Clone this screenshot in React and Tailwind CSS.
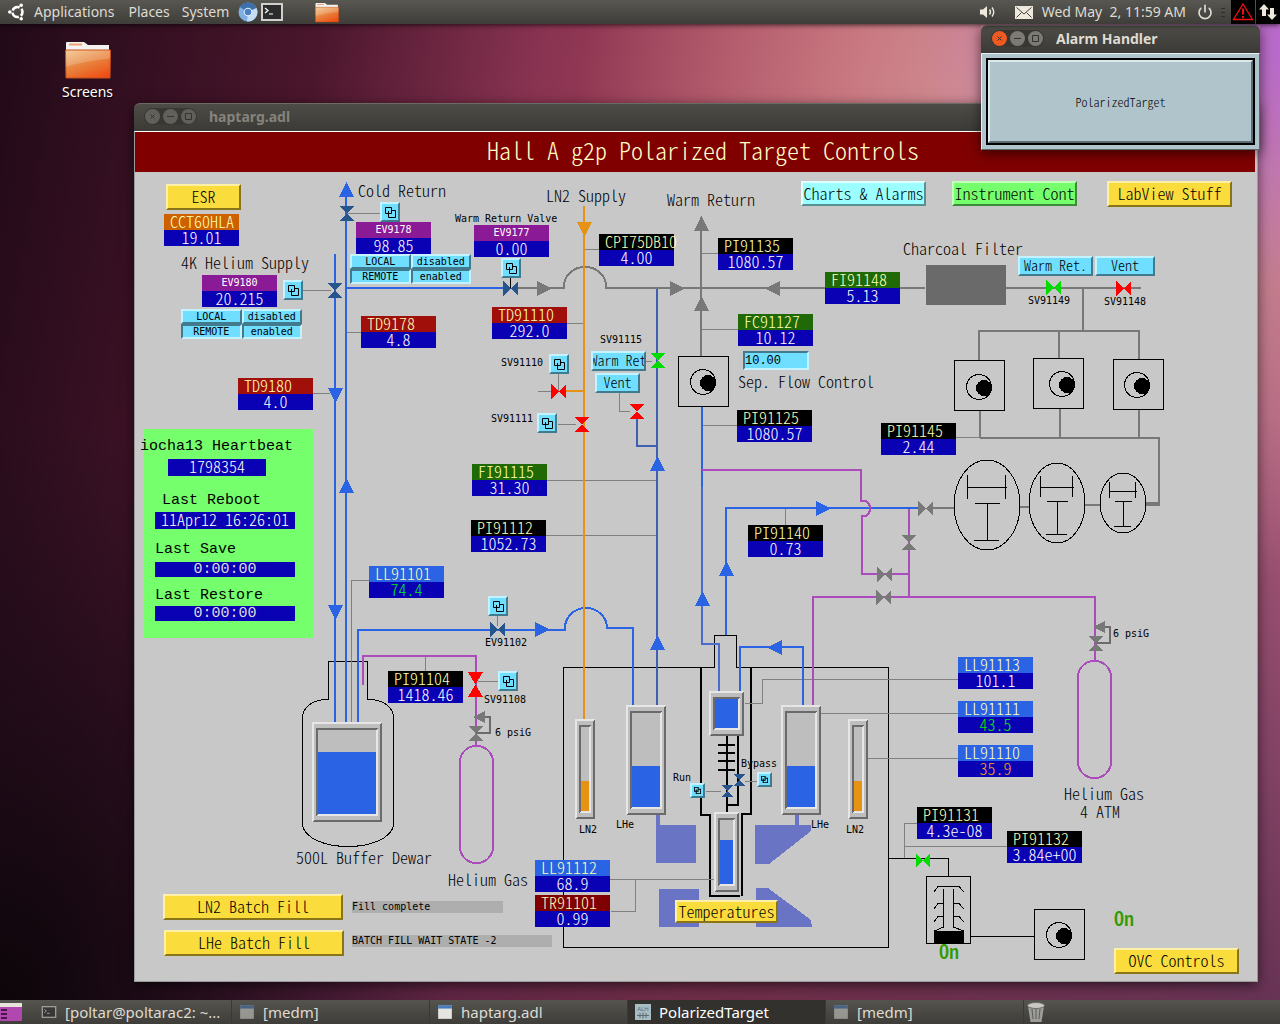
import React, { useState } from 'react';
import { Power } from 'lucide-react';

// Display coordinates are desktop coordinates, the canvas starts here
const ORIGIN = { x: 134, y: 131 };
const at = (x, y) => ({ left: x - ORIGIN.x, top: y - ORIGIN.y });

const BLUE = '#2a63e4';
const DULL = '#3f5fb4';
const GRAY = '#787878';
const PURPLE = '#ac4cbc';
const ORANGE = '#e69214';
const STEEL = '#26548c';
const RED = '#ff0000';
const GREEN = '#00dc00';

const narrow = "font-['Noto_Sans_CJK_JP',monospace] font-light [font-feature-settings:'hwid','liga'_0]";
const mono = "font-['DejaVu_Sans_Mono',monospace]";
const wide = "font-['Liberation_Mono',monospace]";
const ui = "font-['Noto_Sans',sans-serif]";

const labelColors = {
  orange: 'bg-[#cd6100]',
  purple: 'bg-[#8b1a96]',
  red: 'bg-[#a00f0a]',
  maroon: 'bg-[#800000]',
  black: 'bg-black',
  green: 'bg-[#1f6a06]',
  blue: 'bg-[#2a63e4]',
};

const readouts = [
  { x: 164, y: 214, label: 'CCT60HLA', value: '19.01', color: 'orange' },
  { x: 356, y: 222, label: 'EV9178', value: '98.85', color: 'purple' },
  { x: 202, y: 275, label: 'EV9180', value: '20.215', color: 'purple' },
  { x: 474, y: 225, label: 'EV9177', value: '0.00', color: 'purple' },
  { x: 361, y: 316, label: 'TD9178', value: '4.8', color: 'red' },
  { x: 238, y: 378, label: 'TD9180', value: '4.0', color: 'red' },
  { x: 492, y: 307, label: 'TD91110', value: '292.0', color: 'red' },
  { x: 599, y: 234, label: 'CPI75DB10', value: '4.00', color: 'black' },
  { x: 718, y: 238, label: 'PI91135', value: '1080.57', color: 'black' },
  { x: 825, y: 272, label: 'FI91148', value: '5.13', color: 'green' },
  { x: 738, y: 314, label: 'FC91127', value: '10.12', color: 'green' },
  { x: 737, y: 410, label: 'PI91125', value: '1080.57', color: 'black' },
  { x: 881, y: 423, label: 'PI91145', value: '2.44', color: 'black' },
  { x: 472, y: 464, label: 'FI91115', value: '31.30', color: 'green' },
  { x: 471, y: 520, label: 'PI91112', value: '1052.73', color: 'black' },
  { x: 369, y: 566, label: 'LL91101', value: '74.4', color: 'blue', tone: 'text-[#00f000]' },
  { x: 388, y: 671, label: 'PI91104', value: '1418.46', color: 'black' },
  { x: 748, y: 525, label: 'PI91140', value: '0.73', color: 'black' },
  { x: 958, y: 657, label: 'LL91113', value: '101.1', color: 'blue' },
  { x: 958, y: 701, label: 'LL91111', value: '43.5', color: 'blue', tone: 'text-[#00f000]' },
  { x: 958, y: 745, label: 'LL91110', value: '35.9', color: 'blue', tone: 'text-[#ffa414]' },
  { x: 535, y: 860, label: 'LL91112', value: '68.9', color: 'blue' },
  { x: 535, y: 895, label: 'TR91101', value: '0.99', color: 'maroon' },
  { x: 917, y: 807, label: 'PI91131', value: '4.3e-08', color: 'black' },
  { x: 1007, y: 831, label: 'PI91132', value: '3.84e+00', color: 'black' },
];

const titles = [
  [358, 197, 'Cold Return'],
  [181, 269, '4K Helium Supply'],
  [546, 202, 'LN2 Supply'],
  [667, 206, 'Warm Return'],
  [903, 255, 'Charcoal Filter'],
  [738, 388, 'Sep. Flow Control'],
  [296, 864, '500L Buffer Dewar'],
  [448, 886, 'Helium Gas'],
  [1064, 800, 'Helium Gas'],
  [1080, 818, '4 ATM'],
];

const tags = [
  [455, 222, 'Warm Return Valve'],
  [600, 343, 'SV91115'],
  [501, 366, 'SV91110'],
  [491, 422, 'SV91111'],
  [1028, 304, 'SV91149'],
  [1104, 305, 'SV91148'],
  [485, 646, 'EV91102'],
  [484, 703, 'SV91108'],
  [495, 736, '6 psiG'],
  [1113, 637, '6 psiG'],
  [673, 781, 'Run'],
  [741, 767, 'Bypass'],
  [579, 833, 'LN2'],
  [616, 828, 'LHe'],
  [811, 828, 'LHe'],
  [846, 833, 'LN2'],
];

const relatedDisplays = [
  { x: 380, y: 202, name: 'EV9178' },
  { x: 283, y: 280, name: 'EV9180' },
  { x: 501, y: 258, name: 'EV9177' },
  { x: 549, y: 354, name: 'SV91110' },
  { x: 537, y: 413, name: 'SV91111' },
  { x: 488, y: 596, name: 'EV91102' },
  { x: 498, y: 671, name: 'SV91108' },
  { x: 690, y: 783, name: 'Run', small: true },
  { x: 757, y: 772, name: 'Bypass', small: true },
];

const Readout = ({ x, y, label, value, color, tone = 'text-white' }) => (
  <div className="absolute w-[75px]" style={at(x, y)}>
    {color === 'purple' ? (
      <div className={`h-4 text-center text-[10px] leading-4 text-white ${mono} ${labelColors[color]}`}>{label}</div>
    ) : (
      <div className={`h-4 whitespace-nowrap pl-[6px] text-base leading-[14px] text-[#fcffb8] ${narrow} ${labelColors[color]}`}>{label}</div>
    )}
    <div className={`h-4 bg-[#0a00b4] text-center text-base leading-[14px] ${narrow} ${tone}`}>{value}</div>
  </div>
);

const buttonSkins = {
  yellow: 'bg-[#fadc3c] border-t-[#fff0a8] border-l-[#fff0a8] border-r-[#8a7418] border-b-[#8a7418]',
  aqua: 'bg-[#9cffff] border-t-[#e0ffff] border-l-[#e0ffff] border-r-[#569294] border-b-[#569294]',
  green: 'bg-[#76ff6c] border-t-[#c4ffc0] border-l-[#c4ffc0] border-r-[#3e8b3a] border-b-[#3e8b3a]',
  cyan: 'bg-[#70deff] border-t-[#c4f2ff] border-l-[#c4f2ff] border-r-[#407a8c] border-b-[#407a8c]',
};

const CanvasButton = ({ x, y, size, skin = 'yellow', small, children }) => (
  <button
    type="button"
    className={`absolute flex items-center justify-center overflow-hidden whitespace-nowrap border-2 pb-[2px] text-black ${size} ${buttonSkins[skin]} ${narrow} ${small ? 'text-sm leading-[14px]' : 'text-base leading-4'}`}
    style={at(x, y)}
  >
    {children}
  </button>
);

const RelatedDisplay = ({ x, y, name, small }) => (
  <button
    type="button"
    aria-label={`Open ${name}`}
    className={`absolute flex items-center justify-center border-2 ${small ? 'size-[15px]' : 'size-5'} ${buttonSkins.cyan}`}
    style={at(x, y)}
  >
    <svg viewBox="0 0 11 11" className={small ? 'size-[7px]' : 'size-[11px]'} fill="none" stroke="black" strokeWidth={small ? 1.6 : 1}>
      <path d="M0.5 0.5h6v6h-6z" />
      <path d="M7 3.5h3.5v7h-7v-4" />
      <path d="M3.5 4v2.5" />
    </svg>
  </button>
);

const choiceBase = `h-[15px] border-2 text-[10px] leading-[11px] text-black bg-[#70deff] ${mono}`;
const raised = 'border-t-[#c4f2ff] border-l-[#c4f2ff] border-r-[#407a8c] border-b-[#407a8c]';
const sunken = 'border-t-[#407a8c] border-l-[#407a8c] border-r-[#c4f2ff] border-b-[#c4f2ff]';

const ModeSwitch = ({ x, y, name }) => {
  const [remote, setRemote] = useState(true);
  const [enabled, setEnabled] = useState(true);
  return (
    <div role="group" aria-label={name} className="absolute grid w-[121px] grid-cols-2" style={at(x, y)}>
      <button type="button" onClick={() => setRemote(false)} className={`${choiceBase} ${remote ? raised : sunken}`}>LOCAL</button>
      <button type="button" onClick={() => setEnabled(false)} className={`${choiceBase} ${enabled ? raised : sunken}`}>disabled</button>
      <button type="button" onClick={() => setRemote(true)} className={`${choiceBase} ${remote ? sunken : raised}`}>REMOTE</button>
      <button type="button" onClick={() => setEnabled(true)} className={`${choiceBase} ${enabled ? sunken : raised}`}>enabled</button>
    </div>
  );
};

const Field = ({ x, y, className, children }) => (
  <div className={`absolute whitespace-nowrap ${className}`} style={at(x, y)}>{children}</div>
);

// ---- schematic parts ----

const Pipe = ({ d, c = BLUE, w = 2 }) => <path d={d} fill="none" stroke={c} strokeWidth={w} />;

const ValveH = ({ x, y, c, w = 15, h = 15 }) => (
  <path d={`M${x} ${y}v${h}l${w / 2} ${-h / 2}zM${x + w} ${y}v${h}l${-w / 2} ${-h / 2}z`} fill={c} />
);

const ValveV = ({ x, y, c, w = 15, h = 15 }) => (
  <path d={`M${x} ${y}h${w}l${-w / 2} ${h / 2}zM${x} ${y + h}h${w}l${-w / 2} ${-h / 2}z`} fill={c} />
);

const arrowPaths = {
  up: 'M0 15h15l-7.5 -15z',
  down: 'M0 0h15l-7.5 15z',
  right: 'M0 0v15l15 -7.5z',
  left: 'M15 0v15l-15 -7.5z',
};

const Arrow = ({ x, y, dir, c = BLUE }) => (
  <path d={arrowPaths[dir]} transform={`translate(${x} ${y})`} fill={c} />
);

const Pump = ({ x, y, dx = 25, dy = 26 }) => (
  <g>
    <rect x={x + 0.5} y={y + 0.5} width="50" height="50" fill="none" stroke="black" />
    <circle cx={x + dx} cy={y + dy} r="12.5" fill="none" stroke="black" />
    <circle cx={x + dx + 5} cy={y + dy + 1} r="8" fill="black" />
  </g>
);

const Turbo = ({ cx, cy, rx, ry, lines }) => (
  <g fill="none" stroke="black">
    <ellipse cx={cx} cy={cy} rx={rx} ry={ry} />
    <path d={lines} />
  </g>
);

const Vessel = ({ x, y, w, h, level, c = BLUE }) => {
  const ix = x + 4;
  const iy = y + 6;
  const iw = w - 8;
  const ih = h - 12;
  return (
    <g>
      <rect x={x} y={y} width={w} height={h} fill="#bebebe" />
      <path d={`M${x} ${y}h${w}l-2 2h${4 - w}v${h - 4}l-2 2z`} fill="#e6e6e6" />
      <path d={`M${x + w} ${y + h}h${-w}l2 -2h${w - 4}v${4 - h}l2 -2z`} fill="#6a6a6a" />
      <path d={`M${ix} ${iy}h${iw}l-2 2h${4 - iw}v${ih - 4}l-2 2z`} fill="#6a6a6a" />
      <path d={`M${ix + iw} ${iy + ih}h${-iw}l2 -2h${iw - 4}v${4 - ih}l2 -2z`} fill="#e6e6e6" />
      <rect x={ix + 2} y={level} width={iw - 4} height={iy + ih - 2 - level} fill={c} />
    </g>
  );
};

const Regulator = ({ x, y }) => (
  <g>
    <path d={`M${x + 8} ${y + 6}h7v16h-14`} fill="none" stroke="#6b6b6b" strokeWidth="2" />
    <path d={`M${x - 2} ${y + 6}l12 -6v12z`} fill={GRAY} />
    <ValveV x={x - 7} y={y + 15} c={GRAY} />
  </g>
);

const Schematic = () => (
  <svg viewBox="134 131 1124 851" className="absolute left-0 top-0 h-[851px] w-[1124px]">
    <g shapeRendering="crispEdges">
      <rect x="926" y="265" width="80" height="40" fill="#6a6a6a" />

      {/* magnet coils */}
      <g fill="#6a74c4">
        <path d="M656 814h4v11h36v38h-40z" />
        <path d="M659 889h40v38h-40z" />
        <path d="M755 825h40v-11h4v11h12v6l-42 33h-14z" />
        <path d="M756 888h12l43 32l1 7h-56z" />
      </g>

      {/* cryostat and dewar outlines */}
      <g fill="none" stroke="black">
        <path d="M714.5 667.5H563.5V947.5H888.5V667.5H736.5V635.5H714.5V667.5" />
        <path d="M328.5 699.5V661.5H367.5V699.5H372C384 701 393.5 707 393.5 718V826C390 839 370 846.5 348 846.5C326 846.5 306 839 302.5 826V718C302.5 707 312 701 324 699.5H328.5" />
      </g>
      <g fill="none" stroke="black" strokeWidth="2">
        <path d="M701 667V815H710V896H740" />
        <path d="M751 667V814H742V896" />
        <path d="M727 736V812M738 736V805H727" />
        <path d="M718 745h17M718 753h17M718 761h17M718 770h17" />
      </g>

      {/* instrument leads */}
      <g fill="none" stroke="#808080">
        <path d="M347 213.5H380M303 290.5H331M347 332.5H361M313 393.5H330" />
        <path d="M369 580.5H351.5V723" />
        <path d="M538 391.5H551M558.5 374V391M558 424.5H576" />
        <path d="M584 249.5H599M567 323.5H583M702 253.5H718M702 329.5H738M702 425.5H737" />
        <path d="M646 361.5H652M619.5 393V411.5H630" />
        <path d="M547 480.5H657M546 535.5H657M956 437.5H980M785.5 509V525" />
        <path d="M425.5 657V671M478 681.5H498M497.5 616V626" />
        <path d="M706 791.5H721M745 781.5H758" />
        <path d="M745 703.5H762.5V679.5H958M821 713.5H958M868 758.5H958" />
        <path d="M610 879.5H714M611 911.5H635.5V879.5" />
        <path d="M904.5 858V823.5H917M904.5 846.5H1007" />
      </g>
      <path d="M510.5 278V288" stroke="black" />

      {/* warm gas */}
      <Pipe c={GRAY} d="M518 288H564V286A21 19 0 0 1 606 286V288H925M1006 288H1141" />
      <Pipe c={GRAY} d="M701 217V356" />
      <Pipe c={GRAY} d="M1083 288V331M979 360V331H1139V360M1059 331V358" />
      <Pipe c={GRAY} d="M980 411V438M1060 409V438M1139 409V438M980 438H1159V504" />
      <Pipe c={GRAY} d="M931 508H954M1020 507H1029M1085 505H1100" />
      <Pipe c={GRAY} w={4} d="M1146 504H1160" />

      {/* cold lines */}
      <Pipe d="M346 195V722M335 254V722M347 288H504" />
      <Pipe d="M358 722V630H565V628A21 20 0 0 1 607 628H633V706" />
      <Pipe c={DULL} d="M657 289V706M637 419V446H657" />
      <Pipe d="M702 407V487" />
      <Pipe c="#4a6ccc" d="M702 487V644H719V692" />
      <Pipe d="M726 635V508H918" />
      <Pipe d="M740 692V647H803V706" />

      {/* nitrogen */}
      <Pipe c={ORANGE} d="M584 206V720M566 391H584" />

      {/* helium gas */}
      <Pipe c={PURPLE} d="M702 470H861V501H866A6 8 0 0 1 866 516H862V574H909" />
      <Pipe c={PURPLE} d="M909 509V598M813 705V597H1095V661" />
      <Pipe c={PURPLE} d="M363 685V656H476V746" />
      <rect x="460" y="746" width="33" height="117" rx="16" fill="none" stroke={PURPLE} strokeWidth="2" />
      <rect x="1078" y="661" width="33" height="117" rx="16" fill="none" stroke={PURPLE} strokeWidth="2" />

      <Arrow x={339} y={182} dir="up" />
      <Arrow x={339} y={478} dir="up" />
      <Arrow x={328} y={388} dir="down" />
      <Arrow x={328} y={605} dir="down" />
      <Arrow x={577} y={222} dir="down" c={ORANGE} />
      <Arrow x={537} y={281} dir="right" c={GRAY} />
      <Arrow x={670} y={281} dir="right" c={GRAY} />
      <Arrow x={765} y={281} dir="left" c={GRAY} />
      <Arrow x={694} y={216} dir="up" c={GRAY} />
      <Arrow x={694} y={296} dir="up" c={GRAY} />
      <Arrow x={650} y={456} dir="up" />
      <Arrow x={650} y={635} dir="up" />
      <Arrow x={695} y={591} dir="up" />
      <Arrow x={719} y={561} dir="up" />
      <Arrow x={816} y={501} dir="right" />
      <Arrow x={535} y={622} dir="right" />
      <Arrow x={767} y={640} dir="left" />

      <ValveV x={339} y={206} c={STEEL} />
      <ValveV x={327} y={283} c={STEEL} />
      <ValveH x={503} y={281} c={STEEL} />
      <ValveH x={490} y={622} c={STEEL} />
      <ValveV x={733} y={774} w={12} h={12} c={STEEL} />
      <ValveV x={721} y={785} w={12} h={12} c={STEEL} />
      <ValveH x={551} y={384} c={RED} />
      <ValveV x={574} y={417} c={RED} />
      <ValveV x={629} y={404} c={RED} />
      <ValveV x={650} y={353} c={GREEN} />
      <ValveH x={1046} y={280} c={GREEN} />
      <ValveH x={1116} y={281} c={RED} />
      <ValveV x={468} y={672} h={25} c={RED} />
      <ValveH x={918} y={501} c={GRAY} />
      <ValveV x={901} y={535} c={GRAY} />
      <ValveH x={877} y={567} c={GRAY} />
      <ValveH x={876} y={590} c={GRAY} />
      <Regulator x={475} y={711} />
      <Regulator x={1095} y={621} />

      <Vessel x={312} y={722} w={70} h={100} level={752} />
      <Vessel x={575} y={719} w={20} h={100} level={781} c={ORANGE} />
      <Vessel x={848} y={719} w={20} h={100} level={781} c={ORANGE} />
      <Vessel x={626} y={705} w={40} h={110} level={766} />
      <Vessel x={781} y={705} w={40} h={110} level={766} />
      <Vessel x={709} y={691} w={35} h={45} level={699} />
      <Vessel x={714} y={812} w={25} h={80} level={840} />

      <Pump x={678} y={356} />
      <Pump x={954} y={360} dy={27} />
      <Pump x={1033} y={358} dx={29} />
      <Pump x={1113} y={359} dx={24} />
      <Pump x={1034} y={909} />

      <Turbo cx={987} cy={505} rx={33} ry={45} lines="M967.5 475v24M1005.5 475v24M967 487.5h40M975 503.5h25M987.5 503v37M974 540.5h25" />
      <Turbo cx={1057} cy={503} rx={28} ry={40} lines="M1040.5 476v21M1072.5 476v21M1040 487.5h34M1047 501.5h21M1057.5 501v33M1046 534.5h21" />
      <Turbo cx={1123} cy={503} rx={23} ry={30} lines="M1109.5 482v16M1135.5 482v16M1109 491.5h28M1115 501.5h17M1123.5 501v25M1114 526.5h17" />

      {/* OVC pumping station */}
      <g fill="none" stroke="black">
        <path d="M889 858.5H948.5V876M971 936.5H1034" />
        <rect x="926.5" y="876.5" width="44" height="67" />
        <path d="M934 892l4 -5.5h21l5 5.5M943.5 889v38l-9 4M953.5 889v38l10 4" />
        <path d="M943 903.5h-5l-4 5.5M953 903.5h6l5 5.5M943 916.5h-5l-4 5.5M953 916.5h6l5 5.5" />
      </g>
      <rect x="934" y="931" width="30" height="12" fill="black" />
      <ValveH x={916} y={853} w={14} c={GREEN} />

      <rect x="144" y="429" width="169" height="209" fill="#76ff6c" />
    </g>

    <g className={`text-base ${narrow}`}>
      {titles.map(([x, y, text]) => <text key={`${x}-${y}`} x={x} y={y}>{text}</text>)}
    </g>
    <g className={`text-[10px] ${mono}`}>
      {tags.map(([x, y, text]) => <text key={`${x}-${y}`} x={x} y={y}>{text}</text>)}
    </g>
    <g className={`text-[15px] ${wide}`}>
      <text x="140" y="450">iocha13 Heartbeat</text>
      <text x="162" y="504">Last Reboot</text>
      <text x="155" y="553">Last Save</text>
      <text x="155" y="599">Last Restore</text>
    </g>
    <g className="font-['Noto_Sans_CJK_JP',monospace] text-xl font-medium [font-feature-settings:'hwid']" fill="#2f9b00">
      <text x="939" y="959">On</text>
      <text x="1114" y="926">On</text>
    </g>
  </svg>
);

const TargetCanvas = () => {
  const [flow, setFlow] = useState('10.00');
  return (
    <div className="relative h-[851px] overflow-hidden border border-[#9a9a9a] border-t-white bg-[#c8c8c8]">
      <div className="absolute -left-px -top-px h-[851px] w-[1124px]">
        <h1 className={`ml-px mr-[3px] mt-px h-10 bg-[#800000] pl-4 text-center text-2xl leading-9 text-[#ffffc8] ${narrow}`}>
          Hall A g2p Polarized Target Controls
        </h1>
        <Schematic />

        {readouts.map((r) => <Readout key={r.label} {...r} />)}
        {relatedDisplays.map((r) => <RelatedDisplay key={r.name} {...r} />)}

        <CanvasButton x={166} y={184} size="w-[75px] h-[26px]">ESR</CanvasButton>
        <CanvasButton x={801} y={181} size="w-[125px] h-[25px]" skin="aqua">Charts &amp; Alarms</CanvasButton>
        <CanvasButton x={952} y={181} size="w-[125px] h-[25px]" skin="green">Instrument Cont</CanvasButton>
        <CanvasButton x={1107} y={181} size="w-[125px] h-[26px]">LabView Stuff</CanvasButton>
        <CanvasButton x={163} y={894} size="w-[180px] h-[26px]">LN2 Batch Fill</CanvasButton>
        <CanvasButton x={164} y={930} size="w-[180px] h-[26px]">LHe Batch Fill</CanvasButton>
        <CanvasButton x={675} y={900} size="w-[103px] h-[23px]">Temperatures</CanvasButton>
        <CanvasButton x={1114} y={948} size="w-[125px] h-[26px]">OVC Controls</CanvasButton>
        <CanvasButton x={591} y={351} size="w-[55px] h-5" skin="cyan" small>Warm Ret</CanvasButton>
        <CanvasButton x={595} y={373} size="w-[45px] h-5" skin="cyan" small>Vent</CanvasButton>
        <CanvasButton x={1018} y={256} size="w-[75px] h-5" skin="cyan" small>Warm Ret.</CanvasButton>
        <CanvasButton x={1095} y={256} size="w-[60px] h-5" skin="cyan" small>Vent</CanvasButton>

        <ModeSwitch x={350} y={254} name="EV9178 mode" />
        <ModeSwitch x={181} y={309} name="EV9180 mode" />

        <input
          type="text"
          aria-label="Sep. Flow Control"
          value={flow}
          onChange={(e) => setFlow(e.target.value)}
          className={`absolute h-[19px] w-[66px] border-2 bg-[#70deff] text-xs leading-[14px] text-black outline-none ${sunken} ${wide}`}
          style={at(743, 351)}
        />

        <Field x={168} y={459} className={`h-[17px] w-[98px] bg-[#0a00b4] text-center text-base leading-[15px] text-white ${narrow}`}>1798354</Field>
        <Field x={155} y={512} className={`h-[17px] w-[140px] bg-[#0a00b4] text-center text-base leading-[15px] text-white ${narrow}`}>11Apr12 16:26:01</Field>
        <Field x={155} y={562} className={`h-[15px] w-[140px] bg-[#0a00b4] text-center text-[15px] leading-[15px] text-[#dcdcdc] ${wide}`}>0:00:00</Field>
        <Field x={155} y={606} className={`h-[15px] w-[140px] bg-[#0a00b4] text-center text-[15px] leading-[15px] text-[#dcdcdc] ${wide}`}>0:00:00</Field>
        <Field x={352} y={901} className={`h-3 w-[151px] bg-[#aeaeae] text-[10px] leading-[11px] text-black ${mono}`}>Fill complete</Field>
        <Field x={352} y={935} className={`h-3 w-[200px] bg-[#aeaeae] text-[10px] leading-[11px] text-black ${mono}`}>BATCH FILL WAIT STATE -2</Field>
      </div>
    </div>
  );
};

// ---- desktop ----

const WindowButtons = ({ active }) => (
  <div className="flex gap-[3px] rounded-full bg-[#383733] p-px">
    {['M5.5 5.5l4 4M9.5 5.5l-4 4', 'M4 7.5h7', 'M4.5 4.5h6v6h-6z'].map((d, i) => (
      <button
        key={d}
        type="button"
        aria-label={['Close', 'Minimize', 'Maximize'][i]}
        className={`size-[15px] rounded-full ${active && i === 0 ? 'bg-[#ee5a22]' : active ? 'bg-[#7c7a73]' : 'bg-[#62605a]'}`}
      >
        <svg viewBox="0 0 15 15" className="size-[15px]" fill="none" stroke="#33322e"><path d={d} /></svg>
      </button>
    ))}
  </div>
);

const TitleBar = ({ title, active }) => (
  <div className="flex h-7 items-center gap-3 rounded-t-md border-t border-[#6b6a64] bg-linear-to-b from-[#4d4c47] to-[#3b3a36] pb-[2px] pl-[10px]">
    <WindowButtons active={active} />
    <span className={`text-sm font-bold leading-6 ${active ? 'text-[#dfdbd2]' : 'text-[#85837b]'}`}>{title}</span>
  </div>
);

const Folder = ({ className }) => (
  <svg viewBox="0 0 46 38" className={className}>
    <defs>
      <linearGradient id="folder" x1="0.2" y1="0" x2="0.8" y2="1">
        <stop offset="0" stopColor="#f0b878" />
        <stop offset="0.45" stopColor="#e88540" />
        <stop offset="1" stopColor="#ee4d12" />
      </linearGradient>
    </defs>
    <path d="M1 10V2q0-1 1-1h17l4 3h21v8z" fill="#f4f2f0" />
    <path d="M4 2.500h13v2h-13z" fill="#f0a070" />
    <path d="M0.500 9h45l-0.500 28h-44z" fill="url(#folder)" stroke="#c8501c" />
    <path d="M1 9.500h44v8q-22 2-44 8z" fill="#fff" opacity="0.180" />
  </svg>
);

const TerminalIcon = ({ className }) => (
  <svg viewBox="0 0 22 18" className={className}>
    <rect x="1" y="1" width="20" height="16" fill="#2c2c2c" stroke="#cfcfcf" strokeWidth="2" />
    <path d="M4 5l3 2.500l-3 2.500M8 11h4" fill="none" stroke="white" strokeWidth="1.200" />
  </svg>
);

const WindowIcon = () => (
  <svg viewBox="0 0 14 14" className="size-4">
    <rect x="1" y="1" width="12" height="12" fill="#e4e4e0" />
    <rect x="1" y="1" width="12" height="3" fill="#4a7ab8" />
  </svg>
);

const TopPanel = () => (
  <header className="z-20 flex h-6 shrink-0 items-center bg-linear-to-b from-[#585751] to-[#3e3d39] text-sm text-[#dfdbd2] shadow-[0_1px_5px_rgba(0,0,0,0.7)]">
    <nav className="flex items-center pl-2">
      <svg viewBox="0 0 18 18" className="mr-2 size-[18px]" fill="none" stroke="white">
        <circle cx="9.500" cy="9" r="5" strokeWidth="2.600" strokeDasharray="8.400 2.070" strokeDashoffset="4.200" />
        <g fill="white" stroke="none">
          <circle cx="1.800" cy="9" r="1.800" />
          <circle cx="13.200" cy="2.300" r="1.800" />
          <circle cx="13.200" cy="15.700" r="1.800" />
        </g>
      </svg>
      <button type="button" className="mr-[14px]">Applications</button>
      <button type="button" className="mr-3">Places</button>
      <button type="button" className="mr-[9px]">System</button>
      <button type="button" aria-label="Chromium" className="mr-[3px]">
        <svg viewBox="0 0 20 20" className="size-5">
          <circle cx="10" cy="10" r="9.500" fill="#7fb0e0" />
          <path d="M10 10L1.800 5A9.500 9.500 0 0 1 18.500 6z" fill="#3d6fa8" />
          <path d="M10 10l8.500-4A9.500 9.500 0 0 1 9 19.500z" fill="#c4dcf4" />
          <circle cx="10" cy="10" r="4.300" fill="#e8f2fc" />
          <circle cx="10" cy="10" r="3.300" fill="#4a80c8" />
        </svg>
      </button>
      <button type="button" aria-label="Terminal" className="mr-8">
        <TerminalIcon className="h-[18px] w-[22px]" />
      </button>
      <button type="button" aria-label="Files">
        <Folder className="h-[21px] w-6" />
      </button>
    </nav>
    <div className="ml-auto flex h-full items-center">
      <svg viewBox="0 0 18 14" className="mr-[18px] h-[14px] w-[18px]" fill="#eee9dc">
        <path d="M1 4.500h3l4-3.500v12l-4-3.500h-3z" />
        <path d="M10.500 4.500q2 2.500 0 5M13 2.500q3.500 4.500 0 9" fill="none" stroke="#eee9dc" strokeWidth="1.400" />
      </svg>
      <svg viewBox="0 0 18 13" className="mr-[9px] h-[13px] w-[18px]" fill="none" stroke="#45443f">
        <rect width="18" height="13" fill="#eee9dc" stroke="none" />
        <path d="M1.500 1.500l7.500 6.500l7.500-6.500M1.500 11.500l5-5M16.500 11.500l-5-5" />
      </svg>
      <span className="mr-[11px] whitespace-nowrap">Wed May&nbsp; 2, 11:59 AM</span>
      <Power className="mr-2 size-4" strokeWidth={2.5} />
      <span className="mr-[2px] flex w-[8px] flex-col gap-[3px]">
        <i className="h-px w-1 bg-[#2f2e2b]" />
        <i className="h-px w-1 bg-[#2f2e2b]" />
        <i className="h-px w-1 bg-[#2f2e2b]" />
      </span>
      <span className="mr-px flex h-full w-6 items-center justify-center bg-black">
        <svg viewBox="0 0 22 20" className="h-5 w-[22px]" fill="none" stroke="#f01010" strokeWidth="1.300">
          <path d="M11 2L20.500 17.500H1.500z" />
          <path d="M11 6.500v6M11 14v2" strokeWidth="2" />
        </svg>
      </span>
      <span className="flex h-full w-6 items-center justify-center bg-black">
        <svg viewBox="0 0 20 18" className="h-[18px] w-5" fill="#eee9dc">
          <path d="M6 1l5 5.500H8V13H4V6.500H1z" />
          <path d="M14 17l-5-5.500h3V5h4v6.500h3z" />
        </svg>
      </span>
    </div>
  </header>
);

const tasks = [
  { title: '[poltar@poltarac2: ~...', icon: <TerminalIcon className="h-3 w-4 opacity-60" /> },
  { title: '[medm]', icon: <span className="opacity-50"><WindowIcon /></span> },
  { title: 'haptarg.adl', icon: <WindowIcon /> },
  {
    title: 'PolarizedTarget',
    active: true,
    icon: (
      <svg viewBox="0 0 16 16" className="size-4">
        <rect width="16" height="16" fill="#a8bcc4" />
        <text x="8" y="7" textAnchor="middle" fontSize="6" fill="#5a6c74">ALH</text>
        <path d="M2 11.500h12M5 9v5M8 8.500v6M11 9v5" stroke="#5a6c74" />
      </svg>
    ),
  },
  { title: '[medm]', icon: <span className="opacity-50"><WindowIcon /></span> },
];

const TaskBar = () => (
  <footer className="z-20 flex h-6 shrink-0 items-stretch bg-linear-to-b from-[#55544e] to-[#3e3d39] text-[15px] leading-6 text-[#dfdbd2]">
    <button type="button" aria-label="Show desktop" className="flex w-[34px] items-center">
      <svg viewBox="0 0 24 20" className="h-5 w-6">
        <rect x="0" y="1" width="22" height="18" rx="1" fill="#b048b0" />
        <rect x="0" y="1" width="22" height="4" fill="#e8e4dc" />
        <path d="M1 8h6M1 12h6M1 16h6" stroke="#4a1848" strokeWidth="2" />
      </svg>
    </button>
    {tasks.map((t, i) => (
      <button
        key={i}
        type="button"
        className={`flex w-[198px] items-center gap-2 border-r border-[#3a3935] pl-[7px] text-left ${t.active ? 'bg-[#32312e] text-white' : ''}`}
      >
        {t.icon}
        <span className="whitespace-nowrap">{t.title}</span>
      </button>
    ))}
    <button type="button" aria-label="Trash" className="ml-[2px] flex items-center">
      <svg viewBox="0 0 20 22" className="h-[22px] w-5">
        <path d="M2 5h16l-2.500 16h-11z" fill="#9c9c98" />
        <path d="M6 8l1 10M10 8v10M14 8l-1 10" stroke="#5c5c58" />
        <ellipse cx="10" cy="4.500" rx="8.500" ry="3" fill="#c8c8c4" stroke="#6c6c68" />
      </svg>
    </button>
  </footer>
);

const AlarmHandler = () => (
  <section className="absolute left-[981px] top-px w-[279px] shadow-[0_3px_12px_rgba(0,0,0,0.6)]">
    <TitleBar title="Alarm Handler" active />
    <div className="border border-[#e4f0f4] border-b-[#5a6870] border-r-[#5a6870] bg-[#b0c4cc] p-1">
      <button
        type="button"
        className={`block h-[87px] w-full border-2 border-black bg-[#b0c4cc] text-xs text-black ${narrow}`}
      >
        <span className="flex h-full items-center justify-center border-2 border-b-[#5c6c74] border-l-[#dce8ec] border-r-[#5c6c74] border-t-[#dce8ec]">
          PolarizedTarget
        </span>
      </button>
    </div>
  </section>
);

export default function App() {
  return (
    <div className={`flex h-screen min-h-[1024px] flex-col overflow-hidden ${ui}`}>
      <TopPanel />
      <main className="relative flex-1 bg-[radial-gradient(ellipse_30%_25%_at_102%_2%,#b868d0_0%,transparent_100%),radial-gradient(ellipse_40%_50%_at_85%_10%,#d8a0a0_0%,transparent_100%),radial-gradient(ellipse_35%_60%_at_0%_100%,#0c0509_0%,transparent_100%),linear-gradient(to_bottom,transparent_40%,rgba(60,24,56,0.6)_100%),linear-gradient(100deg,#220a18_0%,#4a162c_22%,#8a3452_38%,#b84c5e_60%,#a85c80_100%)]">
        <button type="button" className="absolute left-[62px] top-[17px] flex flex-col items-center gap-[3px] text-sm leading-5 text-white [text-shadow:1px_1px_1px_black]">
          <Folder className="h-[38px] w-[46px]" />
          Screens
        </button>

        <section className="absolute left-[134px] top-[79px] w-[1124px] shadow-[0_3px_12px_rgba(0,0,0,0.6)]">
          <TitleBar title="haptarg.adl" />
          <TargetCanvas />
        </section>

        <AlarmHandler />
      </main>
      <TaskBar />
    </div>
  );
}
